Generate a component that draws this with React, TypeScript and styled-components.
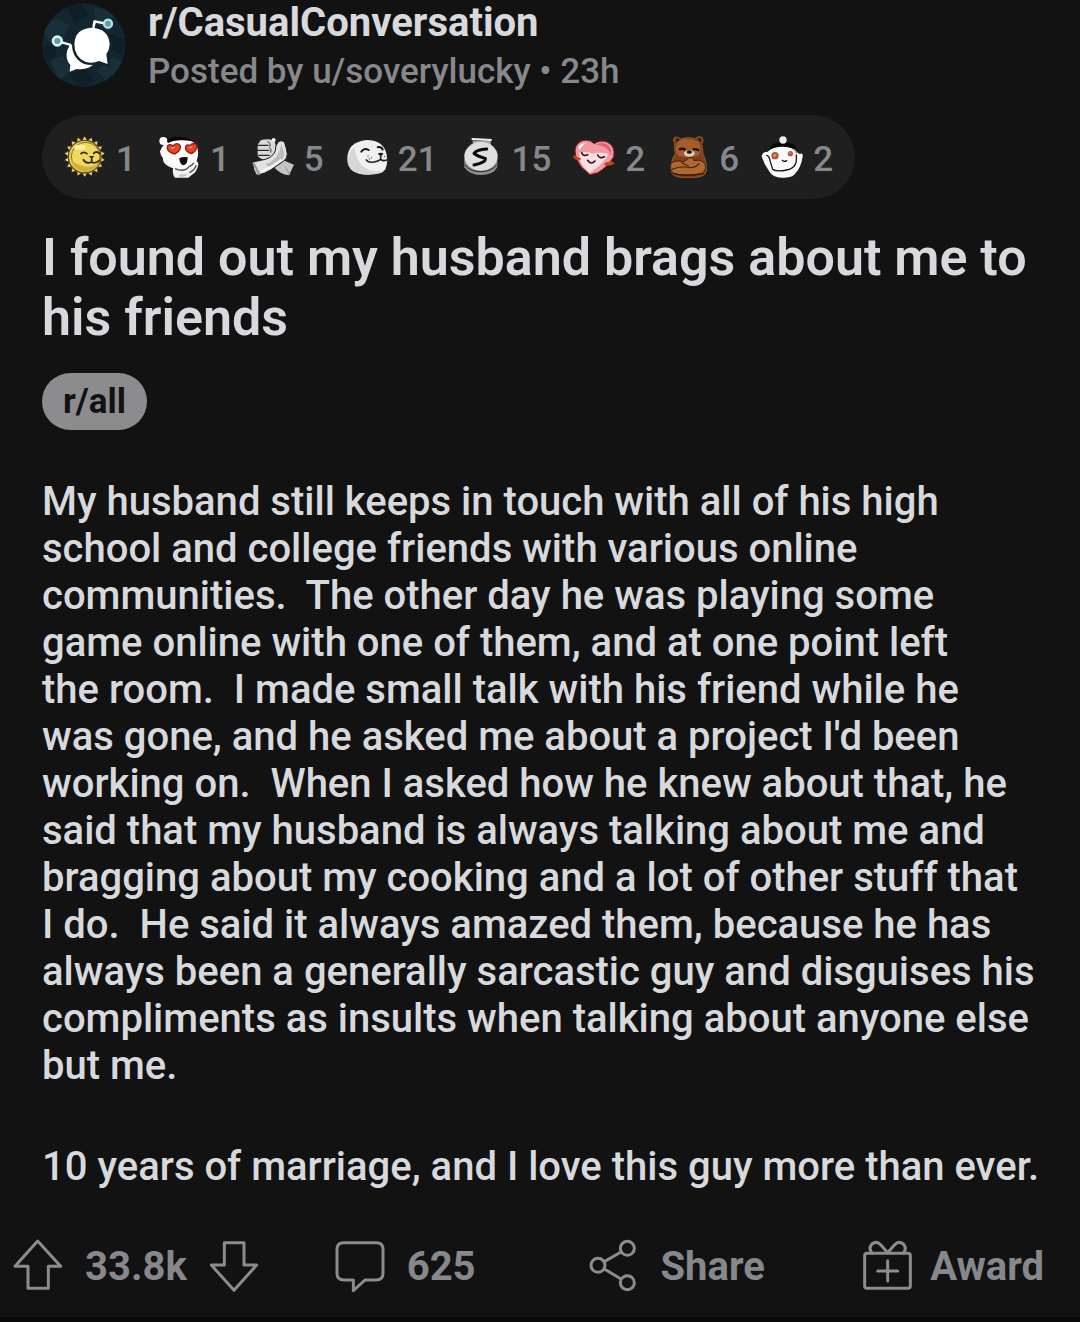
import React from "react";
import styled, { createGlobalStyle } from "styled-components";

const colors = {
  page: "#121213",
  pill: "#1f1f20",
  text: "#d8d9dc",
  muted: "#87888b",
  line: "#8c8c8f",
};

const GlobalStyle = createGlobalStyle`
  *, *::before, *::after { box-sizing: border-box; }
  body {
    margin: 0;
    background: ${colors.page};
    color: ${colors.text};
    font-family: Roboto, "Liberation Sans", sans-serif;
  }
  h1, p, ul { margin: 0; padding: 0; }
  a { color: inherit; text-decoration: none; }
  button { font: inherit; color: inherit; background: none; border: 0; padding: 0; cursor: pointer; }
`;

const Post = styled.article`
  display: flex;
  flex-direction: column;
  padding-top: 3px;
  border-bottom: 5px solid #0b090b;
`;

const Content = styled.div`
  display: flex;
  flex-direction: column;
  align-items: flex-start;
  padding: 0 40px 0 42px;
`;

const Header = styled.header`
  display: flex;
  align-items: flex-start;
  gap: 22px;
`;

const Avatar = styled.svg`
  width: 84px;
  height: 84px;
`;

const Heading = styled.div`
  display: flex;
  flex-direction: column;
`;

const Community = styled.a`
  font-size: 40px;
  line-height: 40px;
  font-weight: 700;
`;

const Byline = styled.span`
  font-size: 35px;
  line-height: 58px;
  font-weight: 500;
  color: ${colors.muted};
`;

const Awards = styled.ul`
  display: flex;
  align-items: center;
  flex-wrap: wrap;
  gap: 0 22px;
  min-height: 84px;
  margin-top: 14px;
  padding: 0 22px;
  border-radius: 42px;
  background: ${colors.pill};
  list-style: none;
`;

const AwardItem = styled.li`
  display: flex;
  align-items: center;
  gap: 10px;
  font-size: 35px;
  line-height: 42px;
  font-weight: 500;
  color: ${colors.muted};
`;

const Count = styled.span`
  padding-top: 6px;
`;

const AwardIcon = styled.svg`
  width: 42px;
  height: 42px;
`;

const Title = styled.h1`
  margin-top: 29px;
  font-size: 52px;
  line-height: 60px;
  font-weight: 600;
`;

const Tag = styled.a`
  margin-top: 25px;
  padding: 1px 21px 0;
  border-radius: 29px;
  background: ${colors.line};
  color: #121213;
  font-size: 35px;
  line-height: 56px;
  font-weight: 700;
`;

const Body = styled.div`
  display: flex;
  flex-direction: column;
  gap: 54px;
  margin-top: 48px;
  font-size: 40px;
  line-height: 47px;
  font-weight: 500;
`;

const Actions = styled.footer`
  display: grid;
  grid-template-columns: 322fr 254fr 274fr 181fr;
  align-items: center;
  margin-top: 49px;
  padding: 0 36px 24px 13px;
  font-size: 40px;
  line-height: 52px;
  font-weight: 700;
  color: ${colors.muted};
`;

const Votes = styled.div`
  display: flex;
  align-items: center;
  gap: 22px;
`;

const IconButton = styled.button`
  display: flex;
`;

const Action = styled.button<{ $gap: number }>`
  display: flex;
  align-items: center;
  gap: ${(p) => p.$gap}px;
  white-space: nowrap;
`;

const Label = styled.span`
  padding-top: 2px;
`;

const ActionIcon = styled.svg`
  flex: none;
  width: 50px;
  height: 54px;
  fill: none;
  stroke: ${colors.line};
  stroke-width: 9;
  stroke-linecap: round;
  stroke-linejoin: round;
`;

function spikes(cx: number, cy: number, count: number, inner: number, outer: number) {
  const points: string[] = [];
  for (let i = 0; i < count * 2; i++) {
    const r = i % 2 ? inner : outer;
    const a = (Math.PI * i) / count;
    points.push(`${(cx + r * Math.sin(a)).toFixed(1)},${(cy - r * Math.cos(a)).toFixed(1)}`);
  }
  return points.join(" ");
}

const Sun = () => (
  <AwardIcon viewBox="70 78 126 126" aria-hidden>
    <polygon points={spikes(132, 140, 18, 49, 62)} fill="#efdc92" stroke="#2c210b" strokeWidth="2" />
    <circle cx="132" cy="140" r="49" fill="#e8cf5c" stroke="#5f4a14" strokeWidth="4" />
    <circle cx="135" cy="140" r="43" fill="#eed85e" stroke="#8a6c22" strokeWidth="3" />
    <path d="M92 150q8 38 52 34q24-4 32-24q-40 24-84-10z" fill="#d2b03c" />
    <ellipse cx="118" cy="112" rx="18" ry="8" fill="#fbf0a0" />
    <path d="M121 131q8-8 18 0M159 130q8-8 17 0" fill="none" stroke="#31240b" strokeWidth="5" strokeLinecap="round" />
    <path d="M144 138h17l-8 9z" fill="#31240b" />
    <path d="M153 146v10M128 149q8 15 25 7q9 7 22-4" fill="none" stroke="#31240b" strokeWidth="5" strokeLinecap="round" />
  </AwardIcon>
);

const HeartEyes = () => (
  <AwardIcon viewBox="352 78 126 126" aria-hidden>
    <path d="M378 98q12-18 40-15q20 0 28 14" fill="#080808" stroke="#080808" strokeWidth="5" />
    <circle cx="368" cy="93" r="12" fill="#fff" />
    <path d="M398 168h45l18-18q12 4 12 14q-4 22-20 31l-10 8h-40q-10-10-5-35z" fill="#f1f1f2" />
    <path d="M358 124q4-14 18-26q24-12 54-8q26 0 38 16q8 22 1 44q-10 24-36 24q-42 8-63-16q-4-8-3-13q-8-8-9-21z" fill="#fafafa" />
    <path d="M380 92q14-14 40-10q22 1 36 12q-16-4-36-3q-22-1-38 8z" fill="#080808" />
    <path d="M403 132c-34-8-26-38-6-24c9-13 28-6 21 9q-3 9-15 15z" fill="#e8442c" stroke="#8c2114" strokeWidth="4" />
    <path d="M453 131c-26-7-22-34-4-24c8-12 25-5 18 10q-4 9-14 14z" fill="#e8442c" stroke="#8c2114" strokeWidth="4" />
    <path d="M393 114l8-2M447 112l6-2" stroke="#ff9a7d" strokeWidth="4" strokeLinecap="round" />
    <path d="M416 144q12-4 25-2q0 22-13 24q-11-2-12-22z" fill="#0b0b0b" />
    <path d="M403 176q28 12 42-6q8-3 15-11M446 188q15-6 21-22" fill="none" stroke="#505053" strokeWidth="4" />
    <path d="M414 193h28q-8 9-25 8z" fill="#c8c8ca" />
  </AwardIcon>
);

const Hands = () => (
  <AwardIcon viewBox="32 78 126 126" aria-hidden>
    <path d="M98 172l26-22l34 14l-15 32q-26-2-45-24z" fill="#c4c4c6" />
    <path d="M132 172l14 22" stroke="#8d8d8f" strokeWidth="3" />
    <path d="M49 104l10-14q26-6 40 2q8 20 4 44l-20 18q-24-4-34-16z" fill="#d9d9da" />
    <path d="M48 106h32M48 121h34M52 136h32" stroke="#2b2b2d" strokeWidth="4" strokeLinecap="round" />
    <path d="M78 94q10 4 8 16M84 112q8 6 4 16" fill="none" stroke="#3a3a3c" strokeWidth="3" />
    <path d="M34 156l38-8q22-6 30-26q0-16 8-26q12-8 20 2q6 18 8 34q0 14-12 22l-38 26q-18 12-42 16q-12-16-12-40z" fill="#e2e2e3" stroke="#18181a" strokeWidth="3" />
    <path d="M74 162q28-8 40-38l6-22l10 34q-14 28-48 36z" fill="#bcbcbf" />
    <path d="M36 158l18 36" stroke="#98989a" strokeWidth="7" />
    <path d="M62 182q30-10 56-32" fill="none" stroke="#f8f8f8" strokeWidth="5" strokeLinecap="round" />
    <circle cx="97" cy="90" r="6" fill="#efeff0" />
  </AwardIcon>
);

const Seal = () => (
  <AwardIcon viewBox="314 78 126 126" aria-hidden>
    <path d="M318 150q-2-54 58-60q46 0 58 36q8 30-2 52q-9 16-52 16q-60 0-62-44z" fill="#f0f0f1" />
    <path d="M320 152q4 40 58 41q36 1 50-9q-80 8-88-72q-22 16-20 40z" fill="#d6d6d8" />
    <path d="M360 125q9-13 22-5M409 112q11-3 15 7" fill="none" stroke="#161616" strokeWidth="6" strokeLinecap="round" />
    <path d="M410 130q8-4 16 0q-2 8-8 8q-7-2-8-8z" fill="#161616" />
    <path d="M418 138v10M375 150q6 9 23 6q13-2 20-8q7 7 18 2" fill="none" stroke="#242424" strokeWidth="5" strokeLinecap="round" />
    <path d="M380 138v1M390 143v1M384 146v1M430 139v1" stroke="#777" strokeWidth="4" strokeLinecap="round" />
  </AwardIcon>
);

const Silver = () => (
  <AwardIcon viewBox="28 78 126 126" aria-hidden>
    <path d="M41 146v26q16 23 49 23q38 0 50-24v-26z" fill="#8e8e90" />
    <path d="M66 92h54v20h-54z" fill="#a9a9ab" />
    <ellipse cx="91" cy="139" rx="50" ry="43" fill="#dfdfe0" />
    <path d="M63 87l60 3" stroke="#f3f3f3" strokeWidth="6" />
    <path d="M43 164q12 20 46 21q34 0 49-21" fill="none" stroke="#202022" strokeWidth="3" />
    <path d="M108 117q-30 2-38 13q7 7 34 15q3 12-34 20" fill="none" stroke="#090909" strokeWidth="9" strokeLinecap="round" strokeLinejoin="round" />
  </AwardIcon>
);

const Heart = () => (
  <AwardIcon viewBox="370 78 126 126" aria-hidden>
    <path d="M421 194l-25-22q-27-38-17-63q14-25 43-16l12 8q16-12 38-5q26 12 20 44q-17 30-48 48z" fill="#f19aa4" stroke="#8b1d23" strokeWidth="3" />
    <path d="M420 189l-18-18q-16-22-12-44q20-4 42 4q22-8 44 2q-12 28-56 56z" fill="#fbdfe1" />
    <path d="M438 104q18-9 33-1q18 11 12 34q-4-28-45-33z" fill="#e4606e" />
    <path d="M386 112q8-14 24-12q-15 7-20 20z" fill="#fff" />
    <path d="M371 136q14 6 24 10q-8 9-15 3q-10-2-9-13zM464 160q10-6 26-5l4 7q-14 7-29 4z" fill="#c4471e" />
    <path d="M396 128q4 12 18 6M444 135q6 13 20 5M414 151q10 15 22 2" fill="none" stroke="#331014" strokeWidth="5" strokeLinecap="round" />
  </AwardIcon>
);

const Bear = () => (
  <AwardIcon viewBox="51 78 126 126" aria-hidden>
    <path d="M74 100q-8-10 0-18q12-4 18 5q22-8 44-1q8-10 20-4q8 9-1 20q4 14 4 30q12 20 10 52q-2 20-53 20q-51 0-52-20q-2-36 12-52q-4-18-2-32z" fill="#7c421e" stroke="#a8622f" strokeWidth="2" />
    <path d="M80 100q8-14 36-12q28 0 34 14q4 20-3 34q-32 12-64 0q-8-16-3-36z" fill="#a65d2d" />
    <path d="M80 84q7-1 8 6l-9 8zM143 88q5-7 11-1l-2 10z" fill="#3a1c0d" />
    <path d="M87 119q10-6 20 1M128 119q10-4 19 3" fill="none" stroke="#1d0d07" strokeWidth="7" />
    <ellipse cx="118" cy="130" rx="16" ry="10" fill="#dccabb" />
    <ellipse cx="118" cy="126" rx="8" ry="5" fill="#171010" />
    <path d="M62 162q12-14 40-7l14-11q14-4 16 8q24-6 34 12q4 18-12 27q-48 8-84 0q-12-12-8-29z" fill="#b0682f" stroke="#40200d" strokeWidth="3" />
    <path d="M66 178q28-12 54-5q18 0 28-13M94 158l22 10" fill="none" stroke="#4e2710" strokeWidth="4" />
    <path d="M68 190q42 12 92 0" fill="none" stroke="#34190b" strokeWidth="4" />
  </AwardIcon>
);

const Cheer = () => (
  <AwardIcon viewBox="335 78 126 126" aria-hidden>
    <path d="M362 118q8-20 38-19q34 0 42 21z" fill="#080808" stroke="#080808" strokeWidth="6" />
    <circle cx="401" cy="90" r="11" fill="#ececee" />
    <path d="M337 138q3-13 18-13q14-15 48-15q28 1 40 17l8 5q10-6 9 8q-5 34-26 55q-12 9-36 8q-28 0-39-20q-16-22-22-45z" fill="#fafafa" />
    <circle cx="377" cy="137" r="11" fill="#b0583c" />
    <circle cx="376" cy="136" r="5" fill="#e78962" />
    <circle cx="423" cy="131" r="8" fill="#b0583c" />
    <circle cx="421" cy="130" r="3" fill="#e78962" />
    <path d="M399 151q5 6 13 1" fill="none" stroke="#111" strokeWidth="4" strokeLinecap="round" />
    <path d="M352 136q8 2 10 16l8 26q12 8 42 2q22-4 28-22q2-12 1-23" fill="none" stroke="#19191a" strokeWidth="4" strokeLinecap="round" />
    <path d="M434 118q8 4 8 12" fill="none" stroke="#b46041" strokeWidth="4" />
  </AwardIcon>
);

const CommunityLogo = () => (
  <Avatar viewBox="36 9 252 252" role="img" aria-label="CasualConversation">
    <defs>
      <clipPath id="logo-clip"><circle cx="162" cy="135" r="125" /></clipPath>
    </defs>
    <g clipPath="url(#logo-clip)">
      <rect x="36" y="9" width="252" height="252" fill="#13252e" />
      <path d="M36 90l40-36l44 22l-20 44l-40 10zM190 20l60 20l-10 60l-44-30zM60 180l40-12l22 40l-34 36zM200 210l50-40l30 20l-50 60z" fill="#192f39" />
      <path d="M110 20l44-8l20 34l-40 22zM240 100l46 20l-10 44l-34-14zM120 220l44-12l30 34l-50 22zM40 140l30-8l10 34l-30 20z" fill="#0f1f28" />
    </g>
    <path d="M112 150q10-22 22-14q-2 44 60 54q-20 22-54 17l-21 8l2-20q-17-17-9-45z" fill="#fff" />
    <path d="M84 124l36 10l4 20" fill="none" stroke="#fff" strokeWidth="7" />
    <path d="M187 92l7-28l38 8" fill="none" stroke="#fff" strokeWidth="7" />
    <path
      d="M133 132q2-46 52-49q52 3 54 51q-1 16-10 29l4 29l-26-9q-18 8-40 3q-34-14-34-54z"
      fill="#fff"
      stroke="#13252e"
      strokeWidth="14"
      paintOrder="stroke"
    />
    <path d="M189 90l5-25" stroke="#fff" strokeWidth="7" />
    <circle cx="82" cy="123" r="13" fill="#5f9d9f" stroke="#d4f2f1" strokeWidth="8" />
    <circle cx="234" cy="71" r="12" fill="#5f9d9f" stroke="#b5e4e3" strokeWidth="7" />
  </Avatar>
);

const awards = [
  { name: "Wholesome sun", Icon: Sun, count: 1 },
  { name: "Heart eyes", Icon: HeartEyes, count: 1 },
  { name: "Bro handshake", Icon: Hands, count: 5 },
  { name: "Wholesome seal", Icon: Seal, count: 21 },
  { name: "Silver", Icon: Silver, count: 15 },
  { name: "Heart", Icon: Heart, count: 2 },
  { name: "Bear hug", Icon: Bear, count: 6 },
  { name: "Cheer", Icon: Cheer, count: 2 },
];

export default function App() {
  return (
    <>
      <GlobalStyle />
      <Post>
        <Content>
          <Header>
            <CommunityLogo />
            <Heading>
              <Community href="#community">r/CasualConversation</Community>
              <Byline>
                Posted by <a href="#author">u/soverylucky</a> • 23h
              </Byline>
            </Heading>
          </Header>
          <Awards>
            {awards.map(({ name, Icon, count }) => (
              <AwardItem key={name} title={name}>
                <Icon />
                <Count>{count}</Count>
              </AwardItem>
            ))}
          </Awards>
          <Title>I found out my husband brags about me to his friends</Title>
          <Tag href="#all">r/all</Tag>
          <Body>
            <p>
              My husband still keeps in touch with all of his high school and college friends with
              various online communities.&nbsp; The other day he was playing some game online with
              one of them, and at one point left the&nbsp;room.&nbsp; I made small talk with his
              friend while he was&nbsp;gone, and he asked me about a project I'd been working
              on.&nbsp; When I asked how he knew about that, he said that my husband is always
              talking about me and bragging about my cooking and a lot of other stuff that
              I&nbsp;do.&nbsp; He said it always amazed them, because he has always been a
              generally sarcastic guy and disguises his compliments as insults when talking about
              anyone else but me.
            </p>
            <p>10 years of marriage, and I love this guy more than ever.</p>
          </Body>
        </Content>
        <Actions>
          <Votes>
            <IconButton type="button" aria-label="Upvote">
              <ActionIcon viewBox="38 42 150 162">
                <path d="M112 48L181 124H144V190H83V124H44Z" />
              </ActionIcon>
            </IconButton>
            <Label>33.8k</Label>
            <IconButton type="button" aria-label="Downvote">
              <ActionIcon viewBox="625 42 150 162">
                <path d="M700 196L768 120H730V53H671V120H632Z" />
              </ActionIcon>
            </IconButton>
          </Votes>
          <Action type="button" $gap={22}>
            <ActionIcon viewBox="46 42 150 162" aria-hidden>
              <path d="M72 53H170Q190 53 190 73V145Q190 165 170 165H136L101 197V165H72Q52 165 52 145V73Q52 53 72 53Z" />
            </ActionIcon>
            <Label>625</Label>
          </Action>
          <Action type="button" $gap={22}>
            <ActionIcon viewBox="806 42 150 162" aria-hidden>
              <circle cx="836" cy="121" r="21" />
              <circle cx="924" cy="70" r="21" />
              <circle cx="924" cy="173" r="21" />
              <path d="M855 110L905 81M855 132L905 162" />
            </ActionIcon>
            <Label>Share</Label>
          </Action>
          <Action type="button" $gap={18}>
            <ActionIcon viewBox="638 42 150 162" aria-hidden>
              <rect x="646" y="85" width="137" height="105" rx="7" />
              <path d="M685 138H745M715 107V168" />
              <path d="M715 83L694 59Q682 46 668 57Q656 70 668 84M715 83L736 59Q748 46 762 57Q774 70 762 84" />
            </ActionIcon>
            <Label>Award</Label>
          </Action>
        </Actions>
      </Post>
    </>
  );
}
